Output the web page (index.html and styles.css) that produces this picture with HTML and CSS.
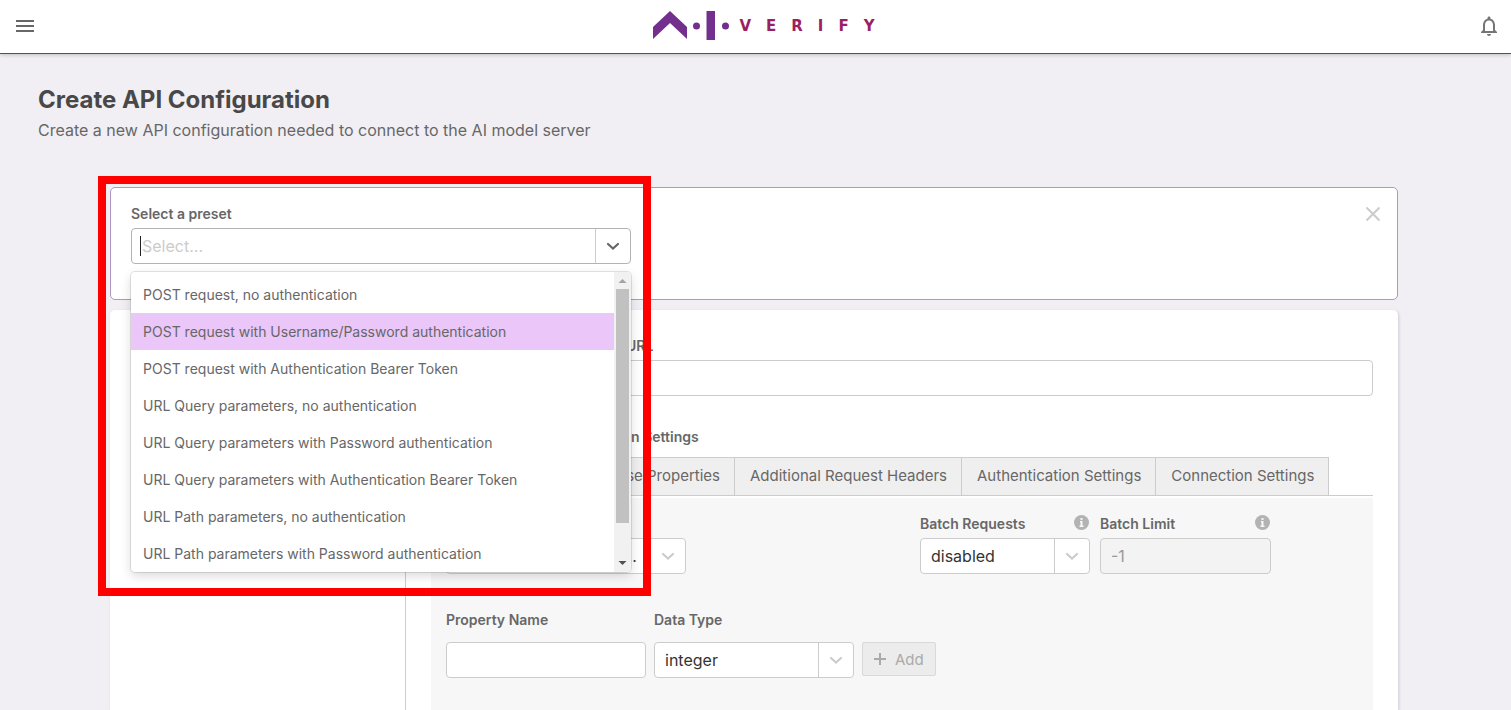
FILE: index.html
```html
<!DOCTYPE html>
<html lang="en">
<head>
<meta charset="utf-8">
<title>Create API Configuration</title>
<link rel="stylesheet" href="styles.css">
</head>
<body>
<header class="topbar">
  <button class="icon-btn" type="button" aria-label="Menu">
    <svg width="24" height="24" viewBox="0 0 24 24" fill="#676767"><path d="M3 18h18v-2H3v2zm0-5h18v-2H3v2zm0-7v2h18V6H3z"/></svg>
  </button>
  <div class="logo">
    <svg width="78" height="32" viewBox="0 0 78 32" fill="#722f8e" aria-hidden="true">
      <path d="M0 17 17 1l17 16v12L17 13 0 29z"/>
      <circle cx="43.500" cy="16" r="3.500"/>
      <path d="M53.500 1H62v29h-8.500z"/>
      <circle cx="72.500" cy="16" r="3.500"/>
    </svg>
    <span class="logo-word">VERIFY</span>
  </div>
  <button class="icon-btn" type="button" aria-label="Notifications">
    <svg width="24" height="24" viewBox="0 0 24 24" fill="#757575"><path d="M12 22c1.100 0 2-.9 2-2h-4c0 1.100.9 2 2 2zm6-6v-5c0-3.070-1.630-5.640-4.500-6.320V4c0-.83-.67-1.500-1.500-1.500s-1.500.67-1.500 1.500v.68C7.640 5.360 6 7.920 6 11v5l-2 2v1h16v-1l-2-2zm-2 1H8v-6c0-2.480 1.510-4.500 4-4.500s4 2.020 4 4.500v6z"/></svg>
  </button>
</header>

<main class="page">
  <div class="heading">
    <h1>Create API Configuration</h1>
    <p>Create a new API configuration needed to connect to the AI model server</p>
  </div>

  <div class="content">
    <section class="card preset">
      <div class="preset-field">
        <label class="label" for="preset">Select a preset</label>
        <div class="combo">
          <input id="preset" type="text" placeholder="Select..." role="combobox" aria-expanded="true" aria-controls="preset-list">
          <span class="caret"></span>
          <button type="button" aria-label="Toggle options"><svg width="20" height="20" viewBox="0 0 20 20" fill="none" stroke="#666" stroke-width="2.200" stroke-linecap="round"><path d="m5 8 5 4.500L15 8"/></svg></button>
          <div class="menu">
            <ul id="preset-list" role="listbox">
              <li role="option">POST request, no authentication</li>
              <li role="option" class="active" aria-selected="true">POST request with Username/Password authentication</li>
              <li role="option">POST request with Authentication Bearer Token</li>
              <li role="option">URL Query parameters, no authentication</li>
              <li role="option">URL Query parameters with Password authentication</li>
              <li role="option">URL Query parameters with Authentication Bearer Token</li>
              <li role="option">URL Path parameters, no authentication</li>
              <li role="option">URL Path parameters with Password authentication</li>
            </ul>
            <div class="scroll">
              <svg width="17" height="17" viewBox="0 0 17 17" fill="#a3a3a3"><path d="m4.500 11 4-4 4 4z"/></svg>
              <div class="thumb"></div>
              <svg width="17" height="17" viewBox="0 0 17 17" fill="#505050"><path d="m4.500 6 4 4 4-4z"/></svg>
            </div>
          </div>
        </div>
      </div>
      <button class="close" type="button" aria-label="Close"><svg width="16" height="16" viewBox="0 0 16 16" stroke="#ccc" stroke-width="2"><path d="m1.500 1.500 13 13M14.500 1.500l-13 13"/></svg></button>
      <div class="highlight"></div>
    </section>

    <section class="card config">
      <div class="side"></div>
      <div class="form">
        <div class="url-row">
          <div class="field method"></div>
          <div class="field">
            <label class="label" for="url">URL</label>
            <input class="control" id="url" type="text">
          </div>
        </div>
        <h2 class="label settings">API Request Configuration Settings</h2>
        <div class="tabs" role="tablist">
          <button type="button" role="tab" class="current" aria-selected="true" aria-label="Request Body"></button>
          <button type="button" role="tab">Response Properties</button>
          <button type="button" role="tab">Additional Request Headers</button>
          <button type="button" role="tab">Authentication Settings</button>
          <button type="button" role="tab">Connection Settings</button>
        </div>
        <div class="panel">
          <div class="row">
            <div class="field media">
              <label class="label" for="media">Media Type</label>
              <div class="select"><select id="media"><option>application/x-www-form-urlencoded</option></select>
                <svg width="20" height="20" viewBox="0 0 20 20"><path d="m5 8 5 4.500L15 8"/></svg></div>
            </div>
            <div class="field batch">
              <div class="label-line"><label class="label" for="batch">Batch Requests</label>
                <svg class="info" width="15" height="15" viewBox="0 0 15 15"><circle cx="7.500" cy="7.500" r="7.500"/><path d="M6.500 3h2v2h-2zM6 6h2.500v4.500H9.500V12H5.500v-1.500h1V7.500H6z"/></svg></div>
              <div class="select"><select id="batch"><option>disabled</option></select>
                <svg width="20" height="20" viewBox="0 0 20 20"><path d="m5 8 5 4.500L15 8"/></svg></div>
            </div>
            <div class="field limit">
              <div class="label-line"><label class="label" for="limit">Batch Limit</label>
                <svg class="info" width="15" height="15" viewBox="0 0 15 15"><circle cx="7.500" cy="7.500" r="7.500"/><path d="M6.500 3h2v2h-2zM6 6h2.500v4.500H9.500V12H5.500v-1.500h1V7.500H6z"/></svg></div>
              <input class="control" id="limit" type="text" value="-1" disabled>
            </div>
          </div>
          <div class="row props">
            <div class="field prop">
              <label class="label" for="prop">Property Name</label>
              <input class="control" id="prop" type="text">
            </div>
            <div class="field prop">
              <label class="label" for="type">Data Type</label>
              <div class="select"><select id="type"><option>integer</option></select>
                <svg width="20" height="20" viewBox="0 0 20 20"><path d="m5 8 5 4.500L15 8"/></svg></div>
            </div>
            <button class="add" type="button" disabled><svg width="12" height="12" viewBox="0 0 12 12" stroke="#aaa" stroke-width="2"><path d="M6 0v12M0 6h12"/></svg>Add</button>
          </div>
        </div>
      </div>
    </section>
  </div>
</main>
</body>
</html>
```
FILE: styles.css
```css
* { box-sizing: border-box; }
body {
  margin: 0;
  height: 100vh;
  overflow: hidden;
  display: flex;
  flex-direction: column;
  background: #f1eff4;
  color: #676767;
  font-family: Inter, "Liberation Sans", sans-serif;
  font-size: 16px;
}
button, input, select { font: inherit; color: inherit; margin: 0; }
svg { display: block; flex: none; }
h1, h2, p, ul { margin: 0; padding: 0; }

.topbar {
  display: flex;
  align-items: center;
  justify-content: space-between;
  height: 54px;
  flex: none;
  padding: 0 10px 2px 13px;
  background: #fff;
  border-bottom: 1px solid #6b3a8c;
  box-shadow: 0 1px 4px rgba(0, 0, 0, .2);
}
.icon-btn { padding: 0; border: 0; background: none; }
.logo { display: flex; align-items: center; gap: 8px; padding-left: 14px; }
.logo-word {
  font: bold 15px/18px "DejaVu Sans", sans-serif;
  letter-spacing: 15px;
  margin-right: -15px;
  color: #9b1f63;
}

.page { flex: 1; display: flex; flex-direction: column; min-height: 0; }
.heading { padding: 30px 38px 0; }
h1 { font-size: 24px; line-height: 32px; font-weight: 700; color: #484848; }
.heading p { line-height: 20px; margin-top: 4px; }

.content {
  flex: 1;
  display: flex;
  flex-direction: column;
  gap: 10px;
  margin: 47px 113px 0 110px;
}
.card { background: #fff; border-radius: 5px; }
.preset {
  position: relative;
  z-index: 1;
  display: flex;
  justify-content: space-between;
  align-items: flex-start;
  height: 113px;
  padding: 16px 16px 0 20px;
  border: 1px solid #b196c1;
}
.preset-field { width: 500px; }
.label {
  display: block;
  font-size: 14px;
  line-height: 20px;
  font-weight: 600;
  color: #676767;
}
.combo {
  position: relative;
  display: flex;
  height: 36px;
  margin-top: 4px;
  border: 1px solid #b3b3b3;
  border-radius: 4px;
}
.combo input {
  flex: 1;
  min-width: 0;
  padding: 0 10px;
  border: 0;
  background: none;
  outline: 0;
}
.combo input::placeholder { color: #ccc; opacity: 1; }
.combo > button {
  width: 35px;
  padding: 0 7px;
  border: 0;
  border-left: 1px solid #ccc;
  background: none;
}
.caret {
  position: absolute;
  left: 8px;
  top: 7px;
  width: 1px;
  height: 20px;
  background: #222;
}
.menu {
  position: absolute;
  top: 43px;
  left: -1px;
  right: -1px;
  display: flex;
  background: #fff;
  border-radius: 4px;
  overflow: hidden;
  box-shadow: 0 0 0 1px rgba(0, 0, 0, .1), 0 4px 11px rgba(0, 0, 0, .15);
}
.menu ul { flex: 1; padding-top: 4px; list-style: none; }
.menu li {
  height: 37px;
  padding: 0 12px;
  font-size: 14px;
  line-height: 37px;
}
.menu .active { background: #eac6f9; }
.scroll { width: 17px; display: flex; flex-direction: column; background: #f1f1f1; }
.thumb { flex: 1; margin: 0 2px 32px; background: #c1c1c1; }
.close { padding: 0; border: 0; background: none; margin-top: 2px; }
.highlight {
  position: absolute;
  top: -12px;
  left: -13px;
  width: 553px;
  height: 420px;
  border: 8px solid #f00;
  pointer-events: none;
}

.config {
  flex: 1;
  display: flex;
  border-radius: 5px 5px 0 0;
  box-shadow: 1px 1px 3px rgba(0, 0, 40, .15);
}
.side { width: 296px; border-right: 1px solid #ccc; }
.form { flex: 1; min-width: 0; display: flex; flex-direction: column; padding: 26px 25px 0; }
.url-row { display: flex; gap: 8px; }
.url-row .field { flex: 1; }
.url-row .method { flex: none; width: 187px; }
.control {
  display: block;
  width: 100%;
  height: 36px;
  padding: 0 10px;
  border: 1px solid #ccc;
  border-radius: 4px;
  background: #fff;
}
.field .control, .select { margin-top: 4px; }
.control:disabled { background: #f3f3f3; color: #999; }
.settings { margin-top: 31px; padding-left: 30px; }
.tabs { display: flex; margin-top: 10px; border-bottom: 1px solid #ccc; }
.tabs button {
  height: 38px;
  padding: 0 14px 2px 15px;
  border: 1px solid #ccc;
  border-width: 1px 1px 0 0;
  background: #efefef;
  font-size: 15px;
  white-space: nowrap;
}
.tabs .current { width: 127px; border-left-width: 1px; background: #fff; }
.panel { flex: 1; margin-top: 2px; padding: 16px 15px; background: #f7f7f7; }
.row { display: flex; }
.media { width: 240px; margin-right: auto; }
.batch { width: 170px; }
.limit { width: 171px; margin: 0 87px 0 10px; }
.label-line { display: flex; justify-content: space-between; align-items: flex-start; }
.info { margin: 1px 1px 0 0; fill: #b3b3b3; }
.info path { fill: #f7f7f7; }
.select {
  display: flex;
  align-items: center;
  height: 36px;
  padding-right: 7px;
  border: 1px solid #ccc;
  border-radius: 4px;
  background: #fff;
}
.select select {
  flex: 1;
  min-width: 0;
  height: 34px;
  margin-right: 7px;
  padding: 0 10px;
  border: 0;
  border-right: 1px solid #ccc;
  appearance: none;
  background: none;
  color: #333;
  text-overflow: ellipsis;
}
.select svg { fill: none; stroke: #ccc; stroke-width: 2.2; stroke-linecap: round; }
.props { gap: 8px; margin-top: 36px; }
.prop { width: 200px; }
.prop .control, .prop .select { margin-top: 12px; }
.add {
  display: flex;
  align-items: center;
  gap: 9px;
  height: 34px;
  margin-top: 32px;
  padding: 0 11px;
  border: 1px solid #d9d9d9;
  border-radius: 2px;
  background: #ececec;
  color: #aaa;
  font-size: 15px;
}
```
